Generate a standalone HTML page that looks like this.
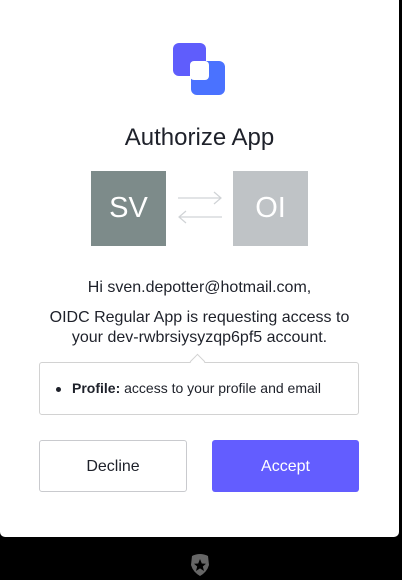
<!DOCTYPE html>
<html><head><style>
body{margin:0;width:402px;height:580px;background:#000;position:relative;overflow:hidden;font-family:"Liberation Sans",Arial,sans-serif}
.card{position:absolute;left:0;top:0;width:399px;height:537px;background:#fff;border-radius:0 0 5px 5px}
.abs{position:absolute}
.t{position:absolute;left:0;width:399px;text-align:center;color:#1e212a}
</style></head><body>
<div class="card">
 <div class="abs" style="left:173px;top:43px;width:33px;height:33px;border-radius:6px;background:#5f5dfc"></div>
 <div class="abs" style="left:191px;top:61px;width:34px;height:34px;border-radius:6px;background:#4a72ff"></div>
 <div class="abs" style="left:190px;top:61px;width:19px;height:19px;border-radius:4px;background:#fff"></div>
 <div class="t" style="top:124px;font-size:24px">Authorize App</div>
 <div class="abs" style="left:91px;top:171px;width:75px;height:75px;background:#7d8b8a;color:#fff;font-size:29px;line-height:75px;text-align:center">SV</div>
 <div class="abs" style="left:233px;top:171px;width:75px;height:75px;background:#bfc3c6;color:#fff;font-size:29px;line-height:75px;text-align:center">OI</div>
 <svg class="abs" style="left:176px;top:190px" width="48" height="36" viewBox="0 0 48 36" fill="none" stroke="#d0d3d6" stroke-width="1.2">
  <path d="M2 8H45M38 2L45 8L38 14"/><path d="M46 27H3M10 21L3 27L10 33"/>
 </svg>
 <div class="t" style="top:279px;font-size:16px">Hi sven.depotter@hotmail.com,</div>
 <div class="t" style="top:308px;font-size:16px;line-height:20px">OIDC Regular App is requesting access to<br>your dev-rwbrsiysyzqp6pf5 account.</div>
 <div class="abs" style="left:39px;top:362px;width:318px;height:51px;border:1px solid #d2d2d2;border-radius:3px"></div>
 <div class="abs" style="left:192px;top:356px;width:10px;height:10px;background:#fff;border-left:1px solid #d2d2d2;border-top:1px solid #d2d2d2;transform:rotate(45deg)"></div>
 <div class="abs" style="left:56px;top:380px;font-size:14px;color:#1e212a"><span style="display:inline-block;width:5px;height:5px;border-radius:50%;background:#1e212a;vertical-align:middle;margin-right:11px"></span><b>Profile:</b> access to your profile and email</div>
 <div class="abs" style="left:39px;top:440px;width:146px;height:50px;border:1px solid #c9cace;border-radius:3px;text-align:center;line-height:52px;font-size:16px;color:#1e212a">Decline</div>
 <div class="abs" style="left:212px;top:440px;width:147px;height:52px;background:#635dff;border-radius:3px;text-align:center;line-height:54px;font-size:16px;color:#fff">Accept</div>
</div>
<svg class="abs" style="left:190px;top:553px" width="20" height="23" viewBox="0 0 20 23">
 <path d="M2 3Q10 -1 18 3L19 12Q17 19 10 23Q3 19 1 12Z" fill="#666"/>
 <path d="M10 6L11.8 10.5L16 10.7L12.8 13.5L14 18L10 15.4L6 18L7.2 13.5L4 10.7L8.2 10.5Z" fill="#000"/>
</svg>
</body></html>
